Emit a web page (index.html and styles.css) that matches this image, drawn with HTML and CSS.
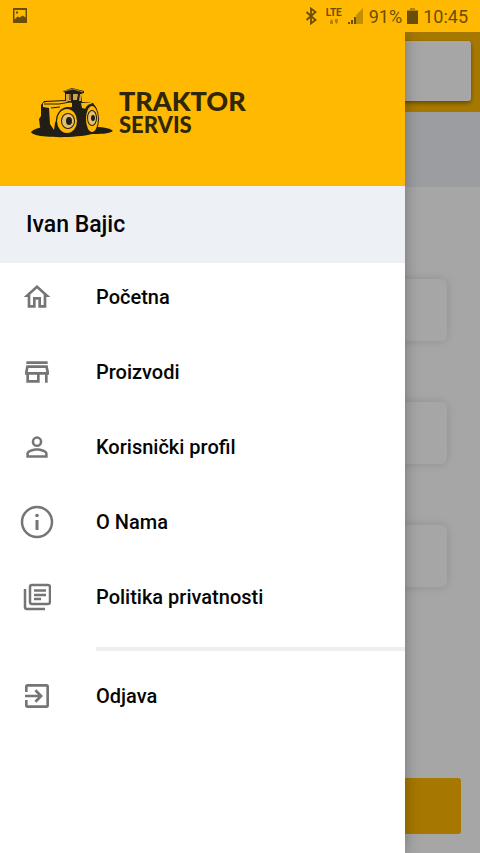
FILE: index.html
```html
<!DOCTYPE html>
<html lang="sr-Latn">
<head>
<meta charset="utf-8">
<meta name="viewport" content="width=device-width, initial-scale=1">
<title>Traktor Servis</title>
<link rel="stylesheet" href="styles.css">
</head>
<body>
<div class="app">
  <header class="status">
    <svg class="status-photo" viewBox="0 0 16 16" aria-hidden="true"><path fill-rule="evenodd" d="M1 0h14v15H1zM2.500 2v9.500l3-3 2 1 3-2 3 2V2zM4 3.500h2v2H4z"/></svg>
    <div class="status-info">
      <svg class="status-bt" viewBox="0 0 12 18" aria-hidden="true"><path d="M1.500 5l9 8L6 16.500v-15L10.500 5l-9 8" fill="none" stroke="currentColor" stroke-width="1.800"/></svg>
      <span class="lte"><span>LTE</span><svg viewBox="0 0 10 5" aria-hidden="true"><path opacity=".5" d="M1 2l2-2 1 2v3H1zM6 0h3v3L7.500 5 6 3z"/></svg></span>
      <svg class="status-signal" viewBox="0 0 17 17" aria-hidden="true"><path d="M1 14h2v2H1zM4 12h2v4H4zM7 9h2v7H7z"/><path opacity=".4" d="M9 7l7-7v16H9z"/></svg>
      <span>91%</span>
      <svg class="status-battery" viewBox="0 0 11 16" aria-hidden="true"><path opacity=".5" d="M3 0h5v2h3v2H0V2h3z"/><path d="M0 3h11v13H0z"/></svg>
      <time>10:45</time>
    </div>
  </header>

  <main class="page" inert>
    <div class="toolbar"><div class="search"></div></div>
    <div class="band"></div>
    <div class="fields">
      <div class="field"></div>
      <div class="field"></div>
      <div class="field"></div>
    </div>
    <div class="action"></div>
  </main>

  <div class="scrim"></div>

  <aside class="drawer">
    <div class="brand">
      <svg class="tractor" viewBox="0 0 88 58" aria-hidden="true">
        <path fill="#211e17" d="M3 48c3-3 7-4 12-5h53c7 0 14 1 17 4-4 3-14 3-21 3-15 4-45 4-56 1-3-1-5-2-5-3z"/>
        <path fill="#211e17" d="M12 43l-1-8 2-3V21l3-4 21-1V9l-2-2 9-3 12 3v2l-3 1 1 8 11 1 4 6-2 20-8 4H15z"/>
        <path fill="#ffb900" d="M15 19l3-1 20-1 6 2v4l-8 2-6 6-3 8-1 7-4-6-1-16-6-1z"/>
        <path fill="#ffb900" d="M53 19l10 0 4 4-5-1-4 3-4-1z"/>
        <path fill="#d0a34a" d="M38 10h5v7h-5zM45 10l5 0-1 6h-4zM52 10h1v7l-2 0z"/>
        <path fill="none" stroke="#211e17" d="M16 20l15 0 11-2M23 24l9-1M42 16v-6M50 17l1-8"/>
        <path fill="none" stroke="#d0a34a" stroke-width=".8" d="M36 7l9-2 10 3"/>
        <ellipse cx="40" cy="37" rx="12" ry="14" fill="#211e17"/><ellipse cx="39" cy="37" rx="10" ry="12" fill="#ffb900"/>
        <ellipse cx="40" cy="37" rx="7" ry="8" fill="#211e17"/><ellipse cx="40" cy="37" rx="6" ry="7" fill="#e2c070"/>
        <ellipse cx="41" cy="37" rx="3" ry="4" fill="#211e17"/>
        <ellipse cx="63" cy="35" rx="8" ry="15" fill="#211e17"/><ellipse cx="64" cy="35" rx="6" ry="13" fill="#ffb900"/>
        <ellipse cx="64" cy="34" rx="5" ry="8" fill="#211e17"/><ellipse cx="64" cy="34" rx="4" ry="7" fill="#e2c070"/>
        <ellipse cx="65" cy="34" rx="2" ry="3" fill="#211e17"/>
      </svg>
      <div class="brand-name"><span class="brand-top">TRAKTOR</span><span class="brand-bottom">SERVIS</span></div>
    </div>
    <div class="user">Ivan Bajic</div>
    <nav class="menu">
      <a class="item" href="#pocetna"><svg class="icon" viewBox="0 0 24 24"><path d="M12 5.690l5 4.500V18h-2v-6H9v6H7v-7.810l5-4.500M12 3L2 12h3v8h6v-6h2v6h6v-8h3L12 3z"/></svg><span>Početna</span></a>
      <a class="item" href="#proizvodi"><svg class="icon" viewBox="0 0 24 24"><path d="M18.360 9l.6 3H5.040l.6-3h12.720M20 4H4v2h16V4zm0 3H4l-1 5v2h1v6h10v-6h4v6h2v-6h1v-2l-1-5zM6 18v-4h6v4H6z"/></svg><span>Proizvodi</span></a>
      <a class="item" href="#profil"><svg class="icon" viewBox="0 0 24 24"><path d="M12 5.900a2.100 2.100 0 110 4.200 2.100 2.100 0 010-4.200m0 9c2.970 0 6.100 1.460 6.100 2.100v1.100H5.900V17c0-.64 3.130-2.100 6.100-2.100M12 4a4 4 0 100 8 4 4 0 000-8zm0 9c-2.670 0-8 1.340-8 4v3h16v-3c0-2.660-5.330-4-8-4z"/></svg><span>Korisnički profil</span></a>
      <a class="item" href="#o-nama"><svg class="icon icon-info" viewBox="0 0 34 34"><circle cx="17" cy="17" r="15" fill="none" stroke="currentColor" stroke-width="2.500"/><path d="M15.500 15h3v10h-3z"/><circle cx="17" cy="10.500" r="1.800"/></svg><span>O Nama</span></a>
      <a class="item" href="#privatnost"><svg class="icon icon-news" viewBox="0 0 28 28"><path fill="none" stroke="currentColor" stroke-width="2.500" d="M2 6v18q0 2 2 2h18M9 2h16q2 0 2 2v15q0 2-2 2H9q-2 0-2-2V4q0-2 2-2zM11 7.500h12M11 12h12M11 16h7"/></svg><span>Politika privatnosti</span></a>
      <hr class="divider">
      <a class="item" href="#odjava"><svg class="icon" viewBox="0 0 24 24"><path d="M10.090 15.590L11.500 17l5-5-5-5-1.410 1.410L12.670 11H3v2h9.670l-2.580 2.590zM19 3H5a2 2 0 00-2 2v4h2V5h14v14H5v-4H3v4a2 2 0 002 2h14a2 2 0 002-2V5a2 2 0 00-2-2z"/></svg><span>Odjava</span></a>
    </nav>
  </aside>
</div>
</body>
</html>
```
FILE: styles.css
```css
* {
  box-sizing: border-box;
}

body {
  margin: 0;
  font-family: Roboto, "Noto Sans", sans-serif;
  color: #050505;
  background: #fff;
}

svg {
  display: block;
  fill: currentColor;
  flex: none;
}

.app {
  position: relative;
  display: flex;
  flex-direction: column;
  min-height: 100vh;
  overflow: hidden;
}

.status {
  position: relative;
  z-index: 3;
  display: flex;
  align-items: center;
  justify-content: space-between;
  height: 32px;
  padding: 0 12px;
  color: #6b4e05;
  background: #ffb900;
  font-size: 18px;
}

.status-info {
  display: flex;
  align-items: center;
  gap: 5px;
}

.status-photo {
  width: 16px;
  height: 16px;
}

.status-bt {
  width: 12px;
  height: 18px;
  margin-right: 4px;
}

.lte {
  display: flex;
  flex-direction: column;
  align-items: center;
  gap: 2px;
  font-size: 10px;
  font-weight: 700;
  line-height: 9px;
}

.lte svg {
  width: 10px;
  height: 5px;
}

.status-signal {
  width: 17px;
  height: 17px;
}

.status-battery {
  width: 11px;
  height: 16px;
}

.page {
  flex: 1;
  display: flex;
  flex-direction: column;
}

.toolbar {
  height: 80px;
  padding: 9px;
  background: #ffb900;
}

.search {
  height: 60px;
  border-radius: 3px;
  background: #fff;
  box-shadow: 0 2px 4px rgba(0, 0, 0, .4);
}

.band {
  height: 75px;
  background: #eef1f7;
}

.fields {
  display: grid;
  gap: 61px;
  padding: 92px 33px 0;
}

.field {
  height: 62px;
  border-radius: 6px;
  background: #fff;
  box-shadow: 0 0 10px rgba(0, 0, 0, .14);
}

.action {
  height: 56px;
  margin: auto 19px 19px;
  border-radius: 3px;
  background: #ffb900;
}

.scrim {
  position: absolute;
  inset: 32px 0 0;
  z-index: 1;
  background: rgba(0, 0, 0, .35);
}

.drawer {
  position: absolute;
  inset: 32px auto 0 0;
  z-index: 2;
  width: calc(100% - 75px);
  background: #fff;
  box-shadow: 0 0 14px rgba(0, 0, 0, .3);
}

.brand {
  display: flex;
  align-items: center;
  gap: 3px;
  height: 154px;
  padding: 8px 28px 0;
  background: #ffb900;
  color: #302609;
}

.tractor {
  width: 88px;
  height: 58px;
}

.brand-name {
  display: flex;
  flex-direction: column;
  font-family: Lato, sans-serif;
  font-weight: 900;
}

.brand-top {
  font-size: 27px;
  line-height: 24px;
}

.brand-bottom {
  font-size: 22px;
  line-height: 24px;
}

.user {
  padding: 0 26px;
  background: #edf1f6;
  font-size: 23px;
  font-weight: 500;
  line-height: 77px;
}

.menu {
  display: flex;
  flex-direction: column;
  gap: 15px;
  padding-top: 4px;
}

.item {
  display: grid;
  grid-template-columns: 74px 1fr;
  column-gap: 22px;
  align-items: center;
  height: 60px;
  color: inherit;
  font-size: 20px;
  font-weight: 500;
  text-decoration: none;
}

.icon {
  width: 32px;
  height: 32px;
  justify-self: center;
  color: #757575;
}

.icon-info {
  width: 34px;
  height: 34px;
}

.icon-news {
  width: 28px;
  height: 28px;
}

.divider {
  width: calc(100% - 96px);
  height: 4px;
  margin: 5px 0 0 96px;
  border: 0;
  background: #eee;
}
```
